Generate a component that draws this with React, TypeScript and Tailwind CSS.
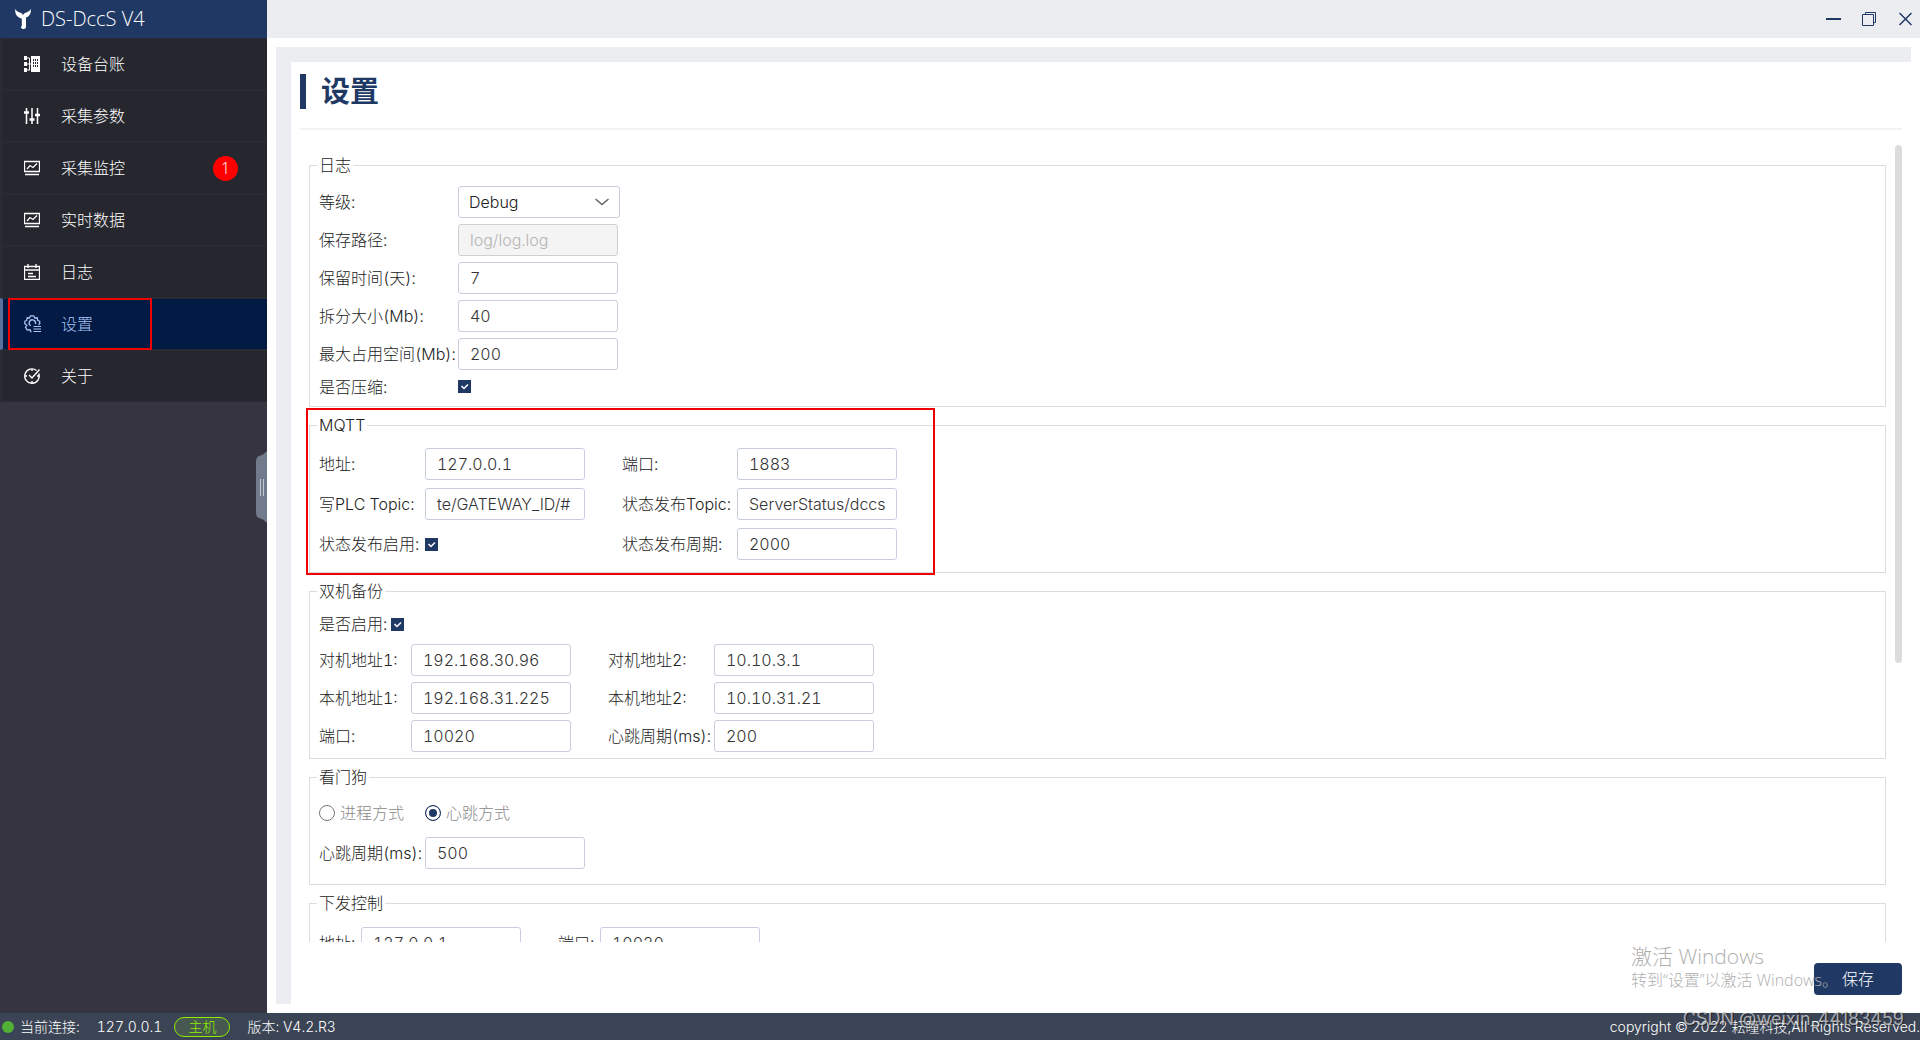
import type { ReactNode } from 'react';

const inputClass =
  'h-8 w-[160px] rounded-[3px] border border-[#c8cedd] bg-white pr-[4px] pl-[11px] text-base text-[#333] outline-none disabled:border-[#cfcfcf] disabled:bg-[#f4f4f4] disabled:text-[#b5b5b5]';

const ListIcon = () => (
  <svg viewBox="0 0 16 16" className="h-4 w-4" fill="currentColor">
    <path d="M0 0h3v4H0zM0 6h3v4H0zM0 12h3v4H0zM3 1.500h2.500v1H3zM3 7.500h4v1H3zM3 13.500h2.500v1H3zM5 2h1v12.500H5z" />
    <path fillRule="evenodd" d="M7 0h9v16H7zM9 3v2h1V3zM11 3v2h1V3zM13 3v2h1V3zM9 6v2h1V6zM11 6v2h1V6zM13 6v2h1V6zM9 9v2h1V9zM11 9v2h1V9zM13 9v2h1V9z" />
  </svg>
);

const SlidersIcon = () => (
  <svg viewBox="0 0 16 16" className="h-4 w-4" fill="none" stroke="currentColor" strokeWidth="1.500">
    <path d="M2.500 0v16M8 0v16M13.500 0v16" />
    <path d="M0 4.500h5M5.500 11.500h5M11 7h5" strokeWidth="2.500" />
  </svg>
);

const ChartIcon = () => (
  <svg viewBox="0 0 16 16" className="h-4 w-4" fill="none" stroke="currentColor" strokeWidth="1.300">
    <path d="M.5 1.500h15v10H.5zM1 14.500h14" />
    <path d="M3 9l3-3.500 3 2 4-4" />
  </svg>
);

const CalendarIcon = () => (
  <svg viewBox="0 0 16 16" className="h-4 w-4" fill="none" stroke="currentColor" strokeWidth="1.300">
    <path d="M.5 2.500h15v13H.5zM1 6h14M4 0v4M12 0v4M4 9.500h5M4 12.500h8" />
  </svg>
);

const GearIcon = () => (
  <svg viewBox="0 0 17 18" className="h-[18px] w-[17px] shrink-0" fill="none" stroke="currentColor" strokeWidth="1.300">
    <path d="M7.500 16.500H6.600L6 14.600 3.300 15 1.500 12.200 2.800 10.200.8 8.700V6.300L2.800 5.200 3.200 2.800 5.400 3 6.500.8H9.700L10.800 3 13.200 2.800 13.700 5.200 15.700 6.300V8.700L14.500 9.700" />
    <path d="M6.800 10.800A3.200 3.200 0 1 1 11.400 9" />
    <path d="M9.500 11.500H17M9.500 14H17M9.500 16.500H17" strokeWidth="1.200" />
  </svg>
);

const AboutIcon = () => (
  <svg viewBox="0 0 16 16" className="h-4 w-4" fill="none" stroke="currentColor" strokeWidth="1.400">
    <path d="M12.500 2.500A7.200 7.200 0 1 0 14.700 5.500" />
    <path d="M5 7l3 3 7.500-8.500M8 1v2M8 13v2M1 8h2M13 8h2" />
  </svg>
);

const menu = [
  { label: '设备台账', icon: <ListIcon /> },
  { label: '采集参数', icon: <SlidersIcon /> },
  { label: '采集监控', icon: <ChartIcon />, badge: 1 },
  { label: '实时数据', icon: <ChartIcon /> },
  { label: '日志', icon: <CalendarIcon /> },
  { label: '设置', icon: <GearIcon />, active: true },
  { label: '关于', icon: <AboutIcon /> },
];

const Sidebar = () => (
  <aside className="relative flex w-[267px] shrink-0 flex-col bg-[#363441]">
    <div className="flex h-[38px] items-center bg-[#203864] pl-[15px] text-white">
      <svg viewBox="0 0 16 20" className="h-5 w-4" fill="currentColor">
        <path d="M.3 0C1.500 2.300 3.500 3 5.500 3.800 7 4.400 7.600 5.200 8 6.200 8.400 5.200 9 4.400 10.500 3.800 12.500 3 14.500 2.300 15.700 0 16.300 4 15 7 11 8.600V18c0 1.300-1 2-2.300 2S6 19.400 6 18l.8-1.200V9.600C2.500 9 -.5 5 .3 0z" />
      </svg>
      <span className="ml-[10px] font-['Open_Sans','Noto_Sans',sans-serif] text-xl font-light">DS-DccS V4</span>
    </div>
    <nav>
      {menu.map((item) => (
        <a
          key={item.label}
          href="#"
          className={
            item.active
              ? 'relative flex h-[52px] items-center border-y border-l-[3px] border-y-[#292a32] border-l-[#5a6f9c] bg-[#031a45] pl-[21px] text-[#a8c3f5]'
              : 'relative flex h-[52px] items-center border-y border-l-[3px] border-[#292a32] bg-[#26272e] pl-[21px] text-white'
          }
        >
          <span className="flex w-[17px] shrink-0">{item.icon}</span>
          <span className="ml-5 text-base">{item.label}</span>
          {item.badge && (
            <span className="mr-[29px] ml-auto flex h-[25px] w-[25px] items-center justify-center rounded-full bg-[#f00] font-['Open_Sans','Noto_Sans',sans-serif] text-base">
              {item.badge}
            </span>
          )}
          {item.active && <span className="absolute -inset-y-px left-[5px] w-[144px] border-2 border-[#f00000]" />}
        </a>
      ))}
    </nav>
    <button type="button" aria-label="收起" className="absolute top-[451px] right-0 h-[72px] w-[11px]">
      <svg viewBox="0 0 11 72" className="h-full w-full">
        <path d="M11 0L7 3.500L2 5.500Q0 7 0 10V62Q0 65 2 66.500L7 68.500L11 72Z" fill="#717b8c" />
        <path d="M4.500 28v17M7.500 28v17" stroke="#c3c8d2" />
      </svg>
    </button>
  </aside>
);

const WindowBar = () => (
  <header className="flex h-[38px] shrink-0 items-center justify-end gap-[21px] bg-[#ecedf1] pr-2 text-[#203864]">
    <button type="button" aria-label="最小化">
      <svg viewBox="0 0 15 14" className="h-[14px] w-[15px]">
        <path d="M0 7h15" stroke="currentColor" strokeWidth="2" />
      </svg>
    </button>
    <button type="button" aria-label="还原">
      <svg viewBox="0 0 14 14" className="h-[14px] w-[14px]" fill="none" stroke="currentColor">
        <path d="M3.500 2.500v-2h10v10h-2M.5 2.500h11v11H.5z" />
      </svg>
    </button>
    <button type="button" aria-label="关闭" className="ml-[2px]">
      <svg viewBox="0 0 13 14" className="h-[14px] w-[13px]" stroke="currentColor" strokeWidth="1.500">
        <path d="M.5 1l12 12M12.500 1l-12 12" />
      </svg>
    </button>
  </header>
);

type GroupProps = { title: string; className: string; children: ReactNode; marked?: boolean };

const Group = ({ title, className, children, marked }: GroupProps) => (
  <fieldset className="relative border border-[#dcdcdc] px-[7px]">
    <legend className="px-[2px] leading-6">{title}</legend>
    <div className={className}>{children}</div>
    {marked && (
      <div className="pointer-events-none absolute -top-[29px] -bottom-[3px] -left-[4px] w-[629px] border-2 border-[#f00000]" />
    )}
  </fieldset>
);

const Check = ({ id }: { id: string }) => (
  <span className="relative flex h-[13px] w-[13px]">
    <input id={id} type="checkbox" defaultChecked className="peer h-[13px] w-[13px] appearance-none border border-[#203864] checked:bg-[#203864]" />
    <svg viewBox="0 0 13 13" className="pointer-events-none absolute inset-0 hidden peer-checked:block" fill="none" stroke="#fff" strokeWidth="1.500">
      <path d="M3.500 6l2.500 2.500 4-4" />
    </svg>
  </span>
);

type FieldProps = { id: string; label: string; value: string; disabled?: boolean };

// label + text box, placed as two cells of the parent grid
const Field = ({ id, label, value, disabled }: FieldProps) => (
  <>
    <label htmlFor={id} className="whitespace-nowrap">{label}</label>
    <input id={id} type="text" defaultValue={value} disabled={disabled} className={inputClass} />
  </>
);

const Radio = ({ id, label, checked }: { id: string; label: string; checked?: boolean }) => (
  <label htmlFor={id} className="flex w-[106px] items-center gap-[5px] text-[#888]">
    <input
      id={id}
      type="radio"
      name="watchdog"
      defaultChecked={checked}
      className="h-4 w-4 appearance-none rounded-full border border-[#777] bg-white checked:border-[#203864] checked:bg-[#203864] checked:shadow-[inset_0_0_0_3px_#fff]"
    />
    {label}
  </label>
);

const SettingsForm = () => (
  <form className="flex min-w-0 flex-1 flex-col gap-[6px] pt-2 pr-[9px] pl-[9px]">
    <Group title="日志" className="grid grid-cols-[139px_auto] grid-rows-[repeat(5,38px)_27px] items-center justify-start px-[2px] pt-[6px] pb-[6px]">
      <label htmlFor="level">等级:</label>
      <span className="relative flex">
        <select id="level" className="h-8 w-[162px] appearance-none rounded-[3px] border border-[#c8cedd] bg-white pl-[10px] text-base outline-none">
          <option>Debug</option>
          <option>Info</option>
          <option>Error</option>
        </select>
        <svg viewBox="0 0 14 8" className="pointer-events-none absolute top-[12px] right-[11px] h-2 w-[14px]" fill="none" stroke="#666" strokeWidth="1.500">
          <path d="M.5 1l6.500 5.500L13.500 1" />
        </svg>
      </span>
      <Field id="path" label="保存路径:" value="log/log.log" disabled />
      <Field id="days" label="保留时间(天):" value="7" />
      <Field id="split" label="拆分大小(Mb):" value="40" />
      <Field id="space" label="最大占用空间(Mb):" value="200" />
      <label htmlFor="zip">是否压缩:</label>
      <Check id="zip" />
    </Group>

    <Group title="MQTT" marked className="grid auto-rows-[40px] grid-cols-[106px_197px_115px_auto] items-center justify-start px-[2px] pt-[7px] pb-2">
      <Field id="mqtt-host" label="地址:" value="127.0.0.1" />
      <Field id="mqtt-port" label="端口:" value="1883" />
      <Field id="mqtt-write" label="写PLC Topic:" value="te/GATEWAY_ID/#" />
      <Field id="mqtt-status" label="状态发布Topic:" value="ServerStatus/dccs" />
      <label htmlFor="mqtt-on">状态发布启用:</label>
      <Check id="mqtt-on" />
      <Field id="mqtt-period" label="状态发布周期:" value="2000" />
    </Group>

    <Group title="双机备份" className="px-[2px] pt-1 pb-[3px]">
      <div className="flex h-[34px] items-center gap-1">
        <label htmlFor="backup-on">是否启用:</label>
        <Check id="backup-on" />
      </div>
      <div className="grid auto-rows-[38px] grid-cols-[92px_197px_106px_auto] items-center justify-start">
        <Field id="peer1" label="对机地址1:" value="192.168.30.96" />
        <Field id="peer2" label="对机地址2:" value="10.10.3.1" />
        <Field id="local1" label="本机地址1:" value="192.168.31.225" />
        <Field id="local2" label="本机地址2:" value="10.10.31.21" />
        <Field id="backup-port" label="端口:" value="10020" />
        <Field id="backup-beat" label="心跳周期(ms):" value="200" />
      </div>
    </Group>

    <Group title="看门狗" className="px-[2px] pt-1 pb-[11px]">
      <div className="flex h-10 items-center">
        <Radio id="by-process" label="进程方式" />
        <Radio id="by-beat" label="心跳方式" checked />
      </div>
      <div className="grid auto-rows-[40px] grid-cols-[106px_auto] items-center justify-start">
        <Field id="dog-beat" label="心跳周期(ms):" value="500" />
      </div>
    </Group>

    <Group title="下发控制" className="grid auto-rows-[40px] grid-cols-[42px_197px_42px_auto] items-center justify-start px-[2px] pt-2 pb-2">
      <Field id="send-host" label="地址:" value="127.0.0.1" />
      <Field id="send-port" label="端口:" value="10020" />
    </Group>
  </form>
);

const StatusBar = () => (
  <footer className="relative flex h-[27px] shrink-0 items-center bg-[#3b4455] pl-[2px] text-sm text-white">
    <span className="h-3 w-3 rounded-full bg-[#52b034]" />
    <span className="ml-[6px]">当前连接:</span>
    <span className="ml-[17px]">127.0.0.1</span>
    <span className="ml-3 flex h-5 w-14 items-center justify-center rounded-full border border-[#8fee00] bg-[#46584f] text-[#8fee00]">主机</span>
    <span className="ml-[17px]">版本: V4.2.R3</span>
    <span className="ml-auto">copyright © 2022 耘瞳科技,All Rights Reserved.</span>
    <span className="pointer-events-none absolute -top-[8px] right-4 text-lg leading-7 font-normal text-white/60 proportional-nums [text-shadow:1px_1px_1px_rgba(0,0,0,0.5)]">
      CSDN @weixin_44183459
    </span>
  </footer>
);

export default function App() {
  return (
    <div className="flex h-screen flex-col overflow-hidden bg-white font-[Inter,'Noto_Sans_CJK_SC',sans-serif] text-base font-light text-[#222] tabular-nums">
      <div className="flex min-h-0 flex-1">
        <Sidebar />
        <div className="flex min-w-0 flex-1 flex-col">
          <WindowBar />
          <main className="relative my-[9px] mr-[9px] ml-[9px] flex min-h-0 flex-1 flex-col border-t-[15px] border-l-[15px] border-[#ecedf1] pt-3 pr-[9px] pb-[9px] pl-[9px]">
            <h1 className="flex h-[35px] items-center border-l-[6px] border-[#203864] pl-[15px] text-[29px] font-bold text-[#203864]">设置</h1>
            <div className="mt-[19px] h-[2px] shrink-0 bg-[#f2f2f2]" />
            <div className="mt-[15px] flex min-h-0 flex-1 overflow-hidden">
              <SettingsForm />
              <div className="h-[65%] w-[7px] shrink-0 rounded-full bg-[#dcdcdc]" />
            </div>
            <div className="mt-[21px] flex justify-end">
              <button type="button" className="h-8 w-[88px] rounded bg-[#203864] text-white">保存</button>
            </div>
            <div className="pointer-events-none absolute right-[86px] bottom-[14px] w-[194px] font-['Open_Sans','Noto_Sans_CJK_SC',sans-serif] whitespace-nowrap text-[#b0b0b0]">
              <p className="text-[21px] leading-7">激活 Windows</p>
              <p className="text-base leading-5">转到“设置”以激活 Windows。</p>
            </div>
          </main>
        </div>
      </div>
      <StatusBar />
    </div>
  );
}
